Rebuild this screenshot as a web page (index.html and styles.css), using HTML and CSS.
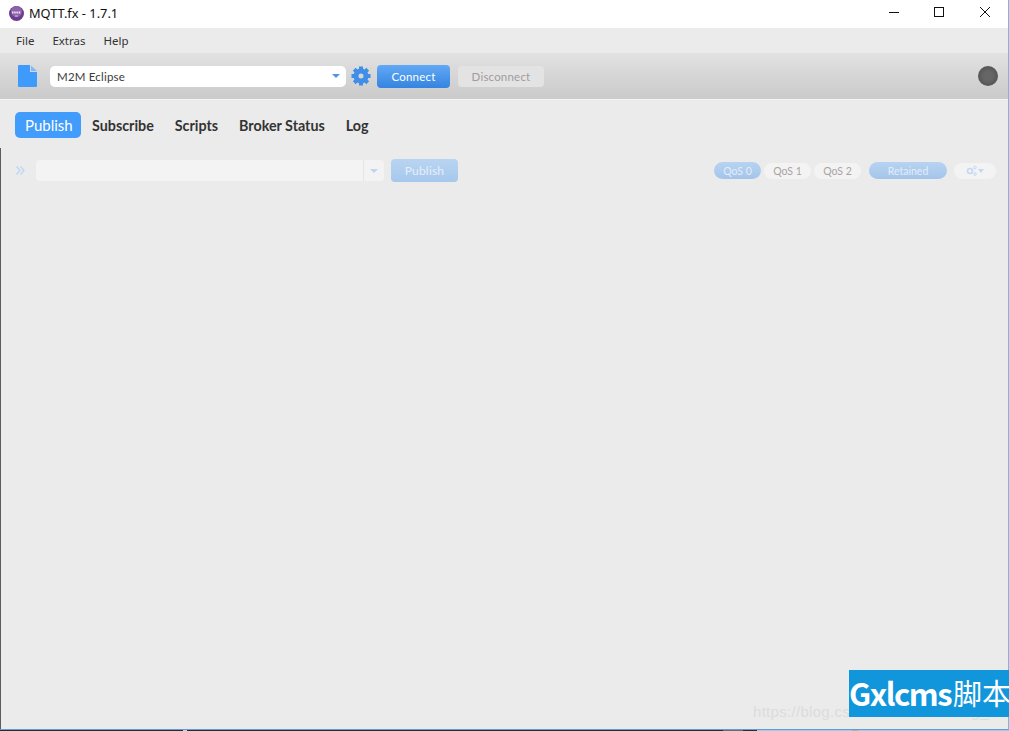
FILE: index.html
```html
<!DOCTYPE html>
<html lang="en">
<head>
    <meta charset="UTF-8">
    <meta name="viewport" content="width=device-width, initial-scale=1.0">
    <title>MQTT.fx - 1.7.1</title>
    <link rel="stylesheet" href="styles.css">
</head>
<body>
    <div class="window">
        <div class="titlebar">
            <svg class="app-icon" width="15" height="15" viewBox="0 0 15 15">
                <circle cx="7.500" cy="7.500" r="7.500" fill="#6b3d8e"/>
                <circle cx="7.500" cy="5.500" r="5.500" fill="#8c62aa"/>
                <path d="M3 6.500h9" stroke="#f0e8f6" stroke-width="2" stroke-dasharray="1.500 0.700"/>
                <path d="M6 10h3" stroke="#d9c9e6" stroke-width="1"/>
            </svg>
            <span class="app-title">MQTT.fx - 1.7.1</span>
            <div class="win-buttons">
                <svg width="46" height="14" viewBox="0 0 46 14"><path d="M19 6.500h10" stroke="#111" fill="none"/></svg>
                <svg width="46" height="14" viewBox="0 0 46 14"><rect x="18.500" y="1.500" width="9" height="9" stroke="#111" fill="none"/></svg>
                <svg width="46" height="14" viewBox="0 0 46 14"><path d="M18 1l10 10M28 1L18 11" stroke="#111" fill="none"/></svg>
            </div>
        </div>

        <div class="menubar">
            <span>File</span>
            <span>Extras</span>
            <span>Help</span>
        </div>

        <div class="toolbar">
            <svg class="file-icon" width="19" height="22" viewBox="0 0 19 22">
                <path d="M0 1a1 1 0 0 1 1-1h11v7h7v14a1 1 0 0 1-1 1H1a1 1 0 0 1-1-1z" fill="#3f9bfb"/>
                <path d="M13 0.500l6 5.500h-6z" fill="#7dbafc"/>
            </svg>
            <div class="profile-select">
                <span>M2M Eclipse</span>
                <i class="caret"></i>
            </div>
            <svg class="gear" width="20" height="20" viewBox="0 0 20 20">
                <g fill="#3f8fe8">
                    <path d="M8 0.500h4v4H8z"/>
                    <path d="M8 0.500h4v4H8z" transform="rotate(45 10 10)"/>
                    <path d="M8 0.500h4v4H8z" transform="rotate(90 10 10)"/>
                    <path d="M8 0.500h4v4H8z" transform="rotate(135 10 10)"/>
                    <path d="M8 0.500h4v4H8z" transform="rotate(180 10 10)"/>
                    <path d="M8 0.500h4v4H8z" transform="rotate(225 10 10)"/>
                    <path d="M8 0.500h4v4H8z" transform="rotate(270 10 10)"/>
                    <path d="M8 0.500h4v4H8z" transform="rotate(315 10 10)"/>
                </g>
                <circle cx="10" cy="10" r="5" fill="none" stroke="#3f8fe8" stroke-width="5"/>
            </svg>
            <button class="btn-connect">Connect</button>
            <button class="btn-disconnect">Disconnect</button>
            <div class="status-led"></div>
        </div>

        <div class="tabs">
            <span class="tab active">Publish</span>
            <span class="tab">Subscribe</span>
            <span class="tab">Scripts</span>
            <span class="tab">Broker Status</span>
            <span class="tab">Log</span>
        </div>

        <div class="content">
            <div class="publish-row">
                <svg class="chevrons" width="9" height="9" viewBox="0 0 9 9">
                    <path d="M0.500 0.500l3.500 4-3.500 4M4.500 0.500l3.500 4-3.500 4" fill="none" stroke="#bcd6f5" stroke-width="1.300"/>
                </svg>
                <div class="topic-select">
                    <div class="topic-input"></div>
                    <div class="topic-arrow"><i class="caret light"></i></div>
                </div>
                <button class="btn-publish">Publish</button>
                <div class="qos-group">
                    <span class="pill on qos">QoS 0</span>
                    <span class="pill qos">QoS 1</span>
                    <span class="pill qos">QoS 2</span>
                    <span class="pill on retained">Retained</span>
                    <span class="pill options">
                        <svg width="11" height="11" viewBox="0 0 11 11">
                            <circle cx="4" cy="6" r="2.500" fill="none" stroke="#c3d9f3" stroke-width="1.600"/>
                            <circle cx="9" cy="2.500" r="1.300" fill="none" stroke="#c3d9f3"/>
                            <circle cx="9" cy="9" r="1.300" fill="none" stroke="#c3d9f3"/>
                        </svg>
                        <i class="caret small"></i>
                    </span>
                </div>
            </div>
        </div>
    </div>
    <div class="screen-edge"></div>

    <div class="watermark">https://blog.csdn.net/xiaolianxing_1995</div>
    <div class="site-badge">Gxlcms<span>脚本</span></div>
</body>
</html>
```

FILE: styles.css
```css
* {
    box-sizing: border-box;
}

html, body {
    height: 100%;
}

body {
    margin: 0;
    overflow: hidden;
    background-color: #ebebeb;
    font-family: "Lato", "Noto Sans", sans-serif;
}

.window {
    display: flex;
    flex-direction: column;
    height: 730px;
    border-right: 1px solid #7fb6e8;
    border-bottom: 1px solid #5f9ed6;
}

.screen-edge {
    height: 1px;
    background: linear-gradient(to right,
        #2b2b2b 183px, #c4d4e2 183px, #c4d4e2 187px, #2b2b2b 187px,
        #2b2b2b 723px, #6b6b6b 723px, #6b6b6b 743px, #2b2b2b 743px,
        #2b2b2b 757px, #a9c8e6 757px, #a9c8e6 852px, #b5b09a 852px,
        #b5b09a 858px, #a9c8e6 858px);
}

.titlebar {
    display: flex;
    align-items: center;
    height: 28px;
    flex-shrink: 0;
    padding-left: 9px;
    padding-bottom: 2px;
    background-color: #fff;
}

.app-title {
    margin-left: 5px;
    font-family: "Noto Sans", sans-serif;
    font-size: 12.800px;
    color: #111;
}

.win-buttons {
    display: flex;
    margin-left: auto;
}

.win-buttons svg {
    display: block;
}

.menubar {
    display: flex;
    align-items: center;
    gap: 18px;
    height: 25px;
    flex-shrink: 0;
    padding-left: 16px;
    background-color: #ebebeb;
    font-family: "Noto Sans", sans-serif;
    font-size: 11.500px;
    color: #333;
}

.toolbar {
    display: flex;
    align-items: center;
    height: 47px;
    flex-shrink: 0;
    padding: 0 10px 0 18px;
    background: linear-gradient(#e3e2e3, #cacaca);
    border-bottom: 1px solid #f4f4f4;
}

.file-icon {
    flex-shrink: 0;
}

.profile-select {
    display: flex;
    align-items: center;
    justify-content: space-between;
    width: 296px;
    height: 21px;
    margin-left: 13px;
    padding: 0 6px 0 7px;
    background-color: #fff;
    border-radius: 5px;
    font-size: 11.500px;
    letter-spacing: 0.200px;
    color: #3b3b3b;
}

.caret {
    display: block;
    width: 0;
    height: 0;
    border-left: 4px solid transparent;
    border-right: 4px solid transparent;
    border-top: 4px solid #4c97e6;
}

.caret.light {
    border-top-color: #bdd5f2;
}

.caret.small {
    border-left-width: 3.500px;
    border-right-width: 3.500px;
    border-top-color: #c3d9f3;
}

.gear {
    flex-shrink: 0;
    margin-left: 5px;
}

button {
    font-family: inherit;
    border: none;
    cursor: pointer;
}

.btn-connect {
    width: 73px;
    height: 23px;
    margin-left: 6px;
    background: linear-gradient(#62a9f5, #3484e0);
    border-radius: 4px;
    font-size: 11.500px;
    letter-spacing: 0.200px;
    color: #fff;
}

.btn-disconnect {
    width: 86px;
    height: 21px;
    margin-left: 8px;
    background-color: #e4e3e4;
    border-radius: 4px;
    font-size: 11.500px;
    letter-spacing: 0.200px;
    color: #a09c9c;
}

.status-led {
    width: 20px;
    height: 20px;
    margin-left: auto;
    border-radius: 50%;
    background: radial-gradient(circle, #666 30%, #4a4a4a 100%);
}

.tabs {
    display: flex;
    align-items: center;
    height: 48px;
    flex-shrink: 0;
    padding-left: 15px;
    padding-top: 2px;
    background-color: #ebebeb;
}

.tab {
    padding: 5px 10px 3px 11px;
    font-size: 14.300px;
    font-weight: 700;
    color: #333;
    line-height: 18px;
}

.tab.active {
    width: 66px;
    padding: 4px 10px;
    background-color: #419cfb;
    border-radius: 5px;
    font-size: 15px;
    font-weight: 400;
    color: #fff;
}

.content {
    flex: 1;
    border-left: 1px solid #5c5c5c;
    background-color: #ebebeb;
}

.publish-row {
    display: flex;
    align-items: center;
    height: 45px;
    padding: 0 12px 0 15px;
}

.chevrons {
    flex-shrink: 0;
}

.topic-select {
    display: flex;
    width: 348px;
    height: 21px;
    margin-left: 11px;
    background-color: #f3f3f3;
    border-radius: 4px;
}

.topic-input {
    flex: 1;
}

.topic-arrow {
    display: flex;
    align-items: center;
    justify-content: center;
    width: 21px;
    border-left: 1px solid #e6e6e6;
}

.btn-publish {
    width: 67px;
    height: 23px;
    margin-left: 7px;
    background: linear-gradient(#b9d4f2, #a6c8ec);
    border-radius: 4px;
    font-size: 12px;
    letter-spacing: 0.200px;
    color: #e6eff9;
}

.qos-group {
    display: flex;
    align-items: center;
    margin-left: auto;
}

.pill {
    display: flex;
    align-items: center;
    justify-content: center;
    height: 16px;
    margin-left: 3px;
    background-color: #f3f3f3;
    border-radius: 8px;
    font-size: 10.500px;
    color: #a8a4a2;
}

.pill.qos {
    width: 47px;
}

.pill.on {
    height: 17px;
    background: linear-gradient(#b8d3f2, #a3c5ea);
    border-radius: 9px;
    color: #e4edf8;
}

.pill.retained {
    width: 78px;
    margin-left: 8px;
}

.pill.options {
    width: 42px;
    gap: 1px;
    margin-left: 7px;
}

.watermark {
    position: absolute;
    left: 753px;
    top: 703px;
    font-family: "Liberation Sans", sans-serif;
    font-size: 15px;
    letter-spacing: 0.300px;
    white-space: nowrap;
    color: #dcdcdc;
}

.site-badge {
    position: absolute;
    left: 849px;
    top: 670px;
    display: flex;
    align-items: center;
    width: 160px;
    height: 47px;
    overflow: hidden;
    padding-bottom: 3px;
    background-color: #1296db;
    font-family: "Noto Sans CJK SC", sans-serif;
    font-size: 31px;
    font-weight: 700;
    letter-spacing: -1.500px;
    white-space: nowrap;
    color: #fff;
}

.site-badge span {
    margin-left: 2px;
    font-size: 29px;
    font-weight: 400;
    letter-spacing: 0;
}
```
